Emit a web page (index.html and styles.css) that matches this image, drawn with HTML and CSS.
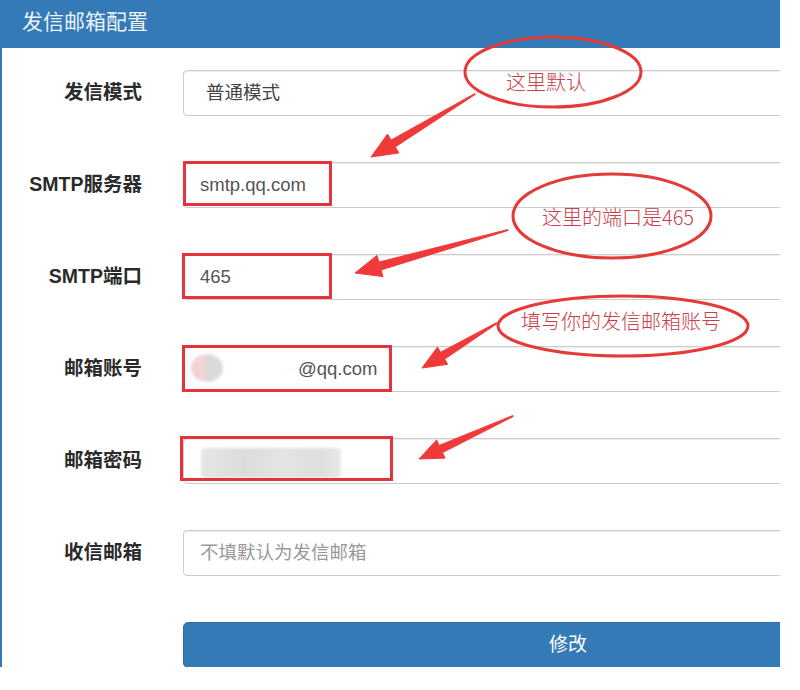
FILE: index.html
```html
<!DOCTYPE html>
<html lang="zh-CN">
<head>
<meta charset="utf-8">
<title>发信邮箱配置</title>
<link rel="stylesheet" href="styles.css">
</head>
<body>
<div class="page">
  <div class="panel">
    <div class="panel-heading">发信邮箱配置</div>
    <div class="panel-body">
      <div class="row">
        <div class="label">发信模式</div>
        <div class="field select">普通模式</div>
      </div>
      <div class="row">
        <div class="label">SMTP服务器</div>
        <div class="field">smtp.qq.com</div>
      </div>
      <div class="row">
        <div class="label">SMTP端口</div>
        <div class="field">465</div>
      </div>
      <div class="row">
        <div class="label">邮箱账号</div>
        <div class="field"><span class="blob"></span><span class="mail">@qq.com</span></div>
      </div>
      <div class="row">
        <div class="label">邮箱密码</div>
        <div class="field"><span class="bar"></span></div>
      </div>
      <div class="row">
        <div class="label">收信邮箱</div>
        <div class="field placeholder">不填默认为发信邮箱</div>
      </div>
      <div class="row">
        <div class="label"></div>
        <div class="btn">修改</div>
      </div>
    </div>
  </div>
  <svg class="overlay" width="800" height="690" viewBox="0 0 800 690">
    <g class="boxes">
      <rect x="184.5" y="162.5" width="146" height="42"/>
      <rect x="183.5" y="254.5" width="147" height="43"/>
      <rect x="183.5" y="346.5" width="207" height="44"/>
      <rect x="181.5" y="437.5" width="210" height="42"/>
    </g>
    <g class="ellipses">
      <ellipse cx="553" cy="72" rx="88" ry="35"/>
      <ellipse cx="612" cy="216" rx="99" ry="42"/>
      <ellipse cx="623" cy="326" rx="125" ry="30"/>
    </g>
    <g class="arrows">
      <polygon points="475.3,94.4 395.3,146.9 398.9,152.9 371,157 387.5,134.1 391.1,140.1 474.7,93.6"/>
      <polygon points="508.1,230.5 381.1,269.9 383,276.6 355,273 377,255.4 378.9,262.1 507.9,229.5"/>
      <polygon points="497.3,323.4 444.7,359.1 447.7,364.3 422,368 437.5,347.1 440.5,352.3 496.7,322.6"/>
      <polygon points="513.2,416.5 442.5,452.6 445,458.1 419,459 436.6,439.9 439.1,445.4 512.8,415.5"/>
    </g>
    <g class="notes">
      <text x="546" y="90">这里默认</text>
      <text x="618" y="225">这里的端口是465</text>
      <text x="621" y="329">填写你的发信邮箱账号</text>
    </g>
  </svg>
</div>
</body>
</html>
```
FILE: styles.css
```css
html, body {
  margin: 0;
  padding: 0;
  background: #fff;
}
body {
  font-family: "Liberation Sans", "Noto Sans CJK SC", sans-serif;
}
.page {
  position: relative;
  width: 800px;
  height: 690px;
  overflow: hidden;
}
.panel {
  width: 780px;
  height: 667px;
  overflow: hidden;
  box-sizing: border-box;
  border-left: 2px solid #337ab7;
}
.panel-heading {
  height: 48px;
  background: #337ab7;
  color: #eef3f8;
  font-size: 21px;
  line-height: 44px;
  padding-left: 22px;
  margin-left: -2px;
}
.panel-body {
  padding-top: 22px;
  display: flex;
  flex-direction: column;
  gap: 46px;
}
.row {
  display: flex;
  align-items: center;
  height: 46px;
}
.label {
  flex: 0 0 140px;
  text-align: right;
  font-weight: bold;
  font-size: 19.5px;
  color: #2a2a2a;
  margin-right: 41px;
  padding-bottom: 5px;
}
.field {
  position: relative;
  flex: 0 0 770px;
  box-sizing: border-box;
  height: 46px;
  border: 1px solid #ccc;
  border-radius: 4px;
  box-shadow: inset 0 1px 1px rgba(0, 0, 0, 0.075);
  padding: 0 16px;
  font-size: 18.5px;
  line-height: 43px;
  color: #555;
  background: #fff;
}
.select {
  padding-left: 22px;
  color: #444;
}
.placeholder {
  color: #999;
}
.blob {
  position: absolute;
  left: 7px;
  top: 7px;
  width: 32px;
  height: 28px;
  border-radius: 50%;
  background: linear-gradient(90deg, #f2d2d2 0%, #efd6d6 40%, #d8d8d8 55%, #dedede 100%);
  filter: blur(1.5px);
}
.mail {
  margin-left: 98px;
}
.bar {
  position: absolute;
  left: 17px;
  top: 9px;
  width: 140px;
  height: 30px;
  border-radius: 4px;
  background: linear-gradient(90deg, #e6e6e6, #dcdcdc 30%, #e4e4e4 60%, #dedede 85%, #e8e8e8);
  filter: blur(1.5px);
}
.btn {
  flex: 0 0 770px;
  box-sizing: border-box;
  height: 46px;
  background: #337ab7;
  border: 1px solid #2e6da4;
  border-radius: 5px;
  color: #fff;
  font-size: 19px;
  line-height: 44px;
  text-align: center;
}
.overlay {
  position: absolute;
  left: 0;
  top: 0;
  pointer-events: none;
}
.boxes rect {
  fill: none;
  stroke: #e5333b;
  stroke-width: 3;
}
.ellipses ellipse {
  fill: none;
  stroke: #e53a3a;
  stroke-width: 3;
}
.arrows polygon {
  fill: #f03a3a;
  stroke: #f03a3a;
  stroke-width: 1;
  stroke-linejoin: round;
}
.notes text {
  font-family: "Noto Sans CJK SC", sans-serif;
  font-size: 20px;
  font-weight: 300;
  fill: #c8404a;
  text-anchor: middle;
}
```
